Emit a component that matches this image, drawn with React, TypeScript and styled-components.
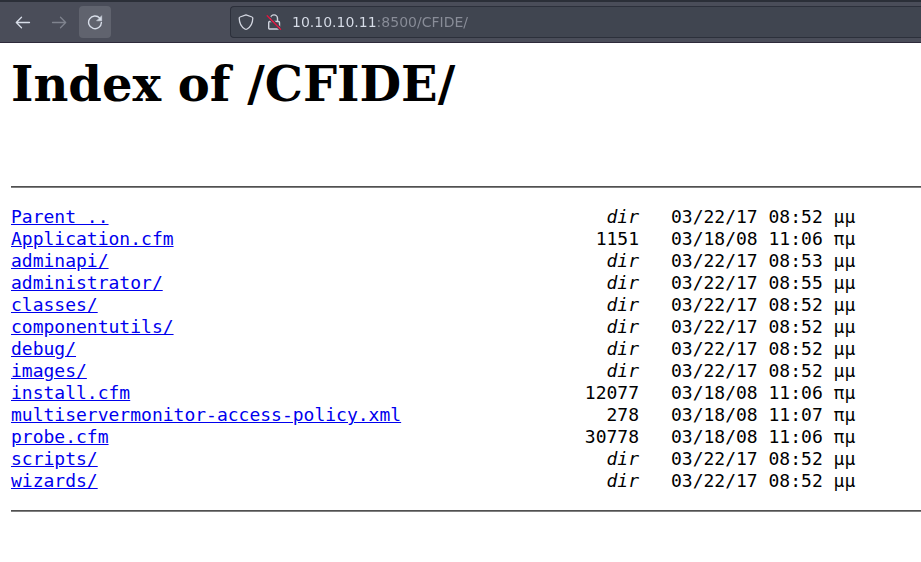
import React from "react";
import styled, { createGlobalStyle } from "styled-components";

const GlobalStyle = createGlobalStyle`
  body {
    margin: 0;
    background: #ffffff;
    color: #000000;
    font-family: "DejaVu Serif", serif;
  }
`;

const Toolbar = styled.header`
  display: flex;
  align-items: flex-start;
  box-sizing: border-box;
  height: 43px;
  padding: 4px 0 0 7px;
  background: #4a4d59;
  border-top: 2px solid #2b2f38;
  border-bottom: 1px solid #2d2a3a;
  overflow: hidden;
`;

const NavButtons = styled.nav`
  display: flex;
  gap: 4px;
`;

const NavButton = styled.button<{ $raised?: boolean }>`
  display: flex;
  align-items: center;
  justify-content: center;
  width: 32px;
  height: 32px;
  padding: 0;
  border: 0;
  border-radius: 4px;
  color: #d8dee9;
  background: ${(p) => (p.$raised ? "#60636e" : "transparent")};

  &:disabled {
    color: #7f838e;
  }
`;

const AddressBar = styled.div`
  display: flex;
  flex: 1;
  align-items: center;
  gap: 12px;
  box-sizing: border-box;
  height: 32px;
  margin-left: 119px;
  padding-left: 7px;
  background: #404550;
  border: 1px solid #2c303b;
  border-right: 0;
  border-radius: 4px 0 0 4px;
`;

const AddressInput = styled.input`
  flex: 1;
  min-width: 0;
  height: 24px;
  margin-left: -2px;
  padding: 0;
  border: 0;
  outline: 0;
  font: 14px "DejaVu Sans", sans-serif;
  color: transparent;
  caret-color: #d8dee9;
  background: linear-gradient(to right, #d8dee9 85px, #898d98 85px);
  background-clip: text;
  -webkit-background-clip: text;
`;

const Icon = styled.svg`
  display: block;
  flex: none;
  fill: none;
  stroke: currentColor;
  color: #d0d4de;
  stroke-linecap: round;
  stroke-linejoin: round;

  ${NavButton} & {
    color: inherit;
  }
`;

const Page = styled.main`
  padding: 13px 0 48px 11px;
`;

const Title = styled.h1`
  margin: 0 0 73px;
  font-size: 48px;
  line-height: 57px;
`;

const Rule = styled.hr`
  height: 0;
  margin: 0;
  border: 0;
  border-top: 1px solid #505050;
  border-bottom: 1px solid #808080;
`;

const Listing = styled.table`
  margin: 18px 0;
  border-collapse: collapse;
  font: 18px/22px "DejaVu Sans Mono", monospace;
  white-space: pre;
`;

const Cell = styled.td`
  height: 22px;
  padding: 0;
`;

const NameCell = styled(Cell)`
  width: 520px;
`;

const SizeCell = styled(Cell)`
  width: 108px;
  text-align: right;
`;

const DateCell = styled(Cell)`
  padding-left: 32px;
`;

const FileLink = styled.a`
  color: #0000ee;
  text-decoration: underline;
`;

type Entry = { name: string; size?: number; date: string };

const entries: Entry[] = [
  { name: "Parent ..", date: "03/22/17 08:52 μμ" },
  { name: "Application.cfm", size: 1151, date: "03/18/08 11:06 πμ" },
  { name: "adminapi/", date: "03/22/17 08:53 μμ" },
  { name: "administrator/", date: "03/22/17 08:55 μμ" },
  { name: "classes/", date: "03/22/17 08:52 μμ" },
  { name: "componentutils/", date: "03/22/17 08:52 μμ" },
  { name: "debug/", date: "03/22/17 08:52 μμ" },
  { name: "images/", date: "03/22/17 08:52 μμ" },
  { name: "install.cfm", size: 12077, date: "03/18/08 11:06 πμ" },
  { name: "multiservermonitor-access-policy.xml", size: 278, date: "03/18/08 11:07 πμ" },
  { name: "probe.cfm", size: 30778, date: "03/18/08 11:06 πμ" },
  { name: "scripts/", date: "03/22/17 08:52 μμ" },
  { name: "wizards/", date: "03/22/17 08:52 μμ" },
];

const BackIcon = () => (
  <Icon width="16" height="16" viewBox="0 0 16 16" strokeWidth="1.3" aria-hidden="true">
    <path d="M14.5 8.500H1.700M6.500 3.200 1.300 8.500 6.500 13.700" />
  </Icon>
);

const ForwardIcon = () => (
  <Icon width="16" height="16" viewBox="0 0 16 16" strokeWidth="1.3" aria-hidden="true">
    <path d="M1.500 8.500h12.800M9.500 3.200 14.700 8.500 9.500 13.700" />
  </Icon>
);

const ReloadIcon = () => (
  <Icon width="16" height="16" viewBox="0 0 16 16" strokeWidth="1.4" aria-hidden="true">
    <path d="M12.800 4.100A6.400 6.400 0 1 0 14.400 8.500" />
    <path d="M14.700 2v4.800H9.900z" fill="currentColor" strokeWidth="0.5" />
  </Icon>
);

const ShieldIcon = () => (
  <Icon width="16" height="16" viewBox="0 0 16 16" strokeWidth="1.3" aria-hidden="true">
    <path d="M8 .8 14 3c.6.2.8.6.8 1.1-.1 4.6-1.8 8.800-5.700 10.900-.7.4-1.500.4-2.200 0C3 12.900 1.300 8.700 1.200 4.100 1.200 3.600 1.400 3.200 2 3z" />
  </Icon>
);

const InsecureIcon = () => (
  <Icon width="16" height="16" viewBox="0 0 16 16" strokeWidth="1.4" aria-hidden="true">
    <path d="M4.500 7V4.400a3.500 3.500 0 0 1 7 0V7" />
    <rect x="2.700" y="7.500" width="10.800" height="7.500" rx="1" />
    <path d="m2 1 13.500 13.500M.5 2.500 13.500 15.500" stroke="#404550" strokeWidth="1.2" />
    <path d="m1.200 1.800 13.300 13.400" stroke="#e5143f" strokeWidth="1.300" />
  </Icon>
);

export default function App() {
  return (
    <>
      <GlobalStyle />
      <Toolbar>
        <NavButtons aria-label="Browser navigation">
          <NavButton type="button" aria-label="Back"><BackIcon /></NavButton>
          <NavButton type="button" aria-label="Forward" disabled><ForwardIcon /></NavButton>
          <NavButton type="button" aria-label="Reload" $raised><ReloadIcon /></NavButton>
        </NavButtons>
        <AddressBar>
          <ShieldIcon />
          <InsecureIcon />
          <AddressInput aria-label="Address" defaultValue="10.10.10.11:8500/CFIDE/" spellCheck={false} />
        </AddressBar>
      </Toolbar>
      <Page>
        <Title>Index of /CFIDE/</Title>
        <Rule />
        <Listing>
          <tbody>
            {entries.map((entry) => (
              <tr key={entry.name}>
                <NameCell><FileLink href={"#" + entry.name}>{entry.name}</FileLink></NameCell>
                <SizeCell>{entry.size ?? <i>dir</i>}</SizeCell>
                <DateCell>{entry.date}</DateCell>
              </tr>
            ))}
          </tbody>
        </Listing>
        <Rule />
      </Page>
    </>
  );
}
